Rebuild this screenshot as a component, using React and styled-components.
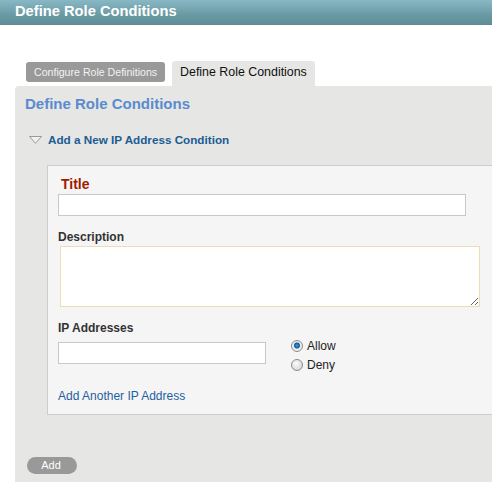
import React from 'react'
import styled, { createGlobalStyle } from 'styled-components'

const GlobalStyle = createGlobalStyle`
    html, body {
        margin: 0;
        padding: 0;
        background: #fff;
        font-family: "Liberation Sans", Arial, sans-serif;
    }
`

const App = () => {
    return (
        <Page>
            <GlobalStyle />
            <HeaderBar>Define Role Conditions</HeaderBar>

            <Content>
                <TabBar>
                    <Tab>Configure Role Definitions</Tab>
                    <Tab active>Define Role Conditions</Tab>
                </TabBar>

                <Panel>
                    <PanelTitle>Define Role Conditions</PanelTitle>

                    <SectionToggle>
                        <svg width="13" height="8" viewBox="0 0 13 8">
                            <polygon points="0.5,0.5 12.5,0.5 6.5,7.3" fill="#f2f2f2" stroke="#9a9a9a" strokeWidth="1" />
                        </svg>
                        <span>Add a New IP Address Condition</span>
                    </SectionToggle>

                    <FormBox>
                        <TitleLabel>Title</TitleLabel>
                        <TextInput width="408px" />

                        <FieldLabel>Description</FieldLabel>
                        <TextArea />

                        <FieldLabel>IP Addresses</FieldLabel>
                        <IpRow>
                            <TextInput width="208px" />
                            <RadioGroup>
                                <RadioOption>
                                    <Radio checked />
                                    <span>Allow</span>
                                </RadioOption>
                                <RadioOption>
                                    <Radio />
                                    <span>Deny</span>
                                </RadioOption>
                            </RadioGroup>
                        </IpRow>

                        <AddLink href="#">Add Another IP Address</AddLink>
                    </FormBox>

                    <AddButton>Add</AddButton>
                </Panel>
            </Content>
        </Page>
    )
}

const Page = styled.div`
    width: 492px;
    height: 482px;
    overflow: hidden;
    display: flex;
    flex-direction: column;
`

const HeaderBar = styled.div`
    height: 24px;
    border-bottom: 1px solid #5a8a94;
    background: linear-gradient(#88b8c4, #6a9ba5 60%, #5e8f99);
    color: #fff;
    font-weight: bold;
    font-size: 14.7px;
    line-height: 23px;
    padding-left: 15px;
    flex-shrink: 0;
`

const Content = styled.div`
    flex: 1;
    display: flex;
    flex-direction: column;
    padding-left: 15px;
    padding-top: 36px;
`

const TabBar = styled.div`
    display: flex;
    align-items: flex-end;
    gap: 7px;
    padding-left: 11px;
`

const Tab = styled.div`
    font-size: ${p => (p.active ? '12.4px' : '10.6px')};
    color: ${p => (p.active ? '#111' : '#f2f2f2')};
    background: ${p => (p.active ? '#e6e6e4' : '#999')};
    border-radius: ${p => (p.active ? '3px 3px 0 0' : '3px')};
    height: ${p => (p.active ? '25px' : '20px')};
    line-height: ${p => (p.active ? '22px' : '20px')};
    margin-bottom: ${p => (p.active ? '0' : '4px')};
    padding: 0 8px;
`

const Panel = styled.div`
    flex: 1;
    background: #e6e6e4;
    border-top-left-radius: 4px;
    padding: 10px 0 0 10px;
    overflow: hidden;
`

const PanelTitle = styled.div`
    color: #5b8bcf;
    font-weight: bold;
    font-size: 15px;
    line-height: 16px;
`

const SectionToggle = styled.div`
    display: flex;
    align-items: center;
    gap: 6px;
    margin-top: 21px;
    padding-left: 4px;
    color: #1c5c94;
    font-weight: bold;
    font-size: 11.7px;
    line-height: 14px;
`

const FormBox = styled.div`
    margin: 18px -20px 0 22px;
    background: #f5f5f5;
    border: 1px solid #cdcdcd;
    padding: 10px 10px 11px 10px;
    display: flex;
    flex-direction: column;
    align-items: flex-start;
`

const TitleLabel = styled.div`
    color: #a01c00;
    font-weight: bold;
    font-size: 14px;
    line-height: 16px;
    padding-left: 3px;
    margin-bottom: 2px;
`

const FieldLabel = styled.div`
    color: #333;
    font-weight: bold;
    font-size: 12px;
    line-height: 14px;
    margin-top: 14px;
    margin-bottom: 2px;
`

const TextInput = styled.input`
    width: ${p => p.width};
    height: 22px;
    box-sizing: border-box;
    border: 1px solid #c8c8c8;
    background: #fff;
    margin: 0;
    padding: 2px 4px;
`

const TextArea = styled.textarea`
    width: 420px;
    height: 61px;
    box-sizing: border-box;
    border: 1px solid #f0dcb4;
    background: #fff;
    margin: 0 0 0 2px;
    padding: 2px;
    resize: both;
    font-family: inherit;
`

const IpRow = styled.div`
    display: flex;
    align-items: flex-start;
    gap: 25px;
    margin-top: 5px;
`

const RadioGroup = styled.div`
    display: flex;
    flex-direction: column;
    gap: 5px;
    margin-top: -3px;
`

const RadioOption = styled.label`
    display: flex;
    align-items: center;
    gap: 4px;
    font-size: 12px;
    color: #222;
    line-height: 14px;
`

const Radio = styled.span`
    width: 12px;
    height: 12px;
    box-sizing: border-box;
    border-radius: 50%;
    border: 1px solid #8a8a8a;
    background: ${p => (p.checked
        ? 'radial-gradient(circle at 50% 45%, #3aa0e0 0, #0c5f9e 2.5px, #e8e8e8 3.5px, #f4f4f4 6px)'
        : 'radial-gradient(circle at 40% 35%, #fafafa, #d0d0d0)')};
    display: inline-block;
`

const AddLink = styled.a`
    color: #1f5f9e;
    font-size: 12px;
    line-height: 14px;
    text-decoration: none;
    margin-top: 17px;
`

const AddButton = styled.div`
    width: 50px;
    height: 17px;
    margin-top: 42px;
    margin-left: 2px;
    border-radius: 9px;
    background: #999;
    color: #fff;
    font-size: 11px;
    line-height: 17px;
    text-align: center;
    padding-right: 2px;
    box-sizing: border-box;
`

export default App
